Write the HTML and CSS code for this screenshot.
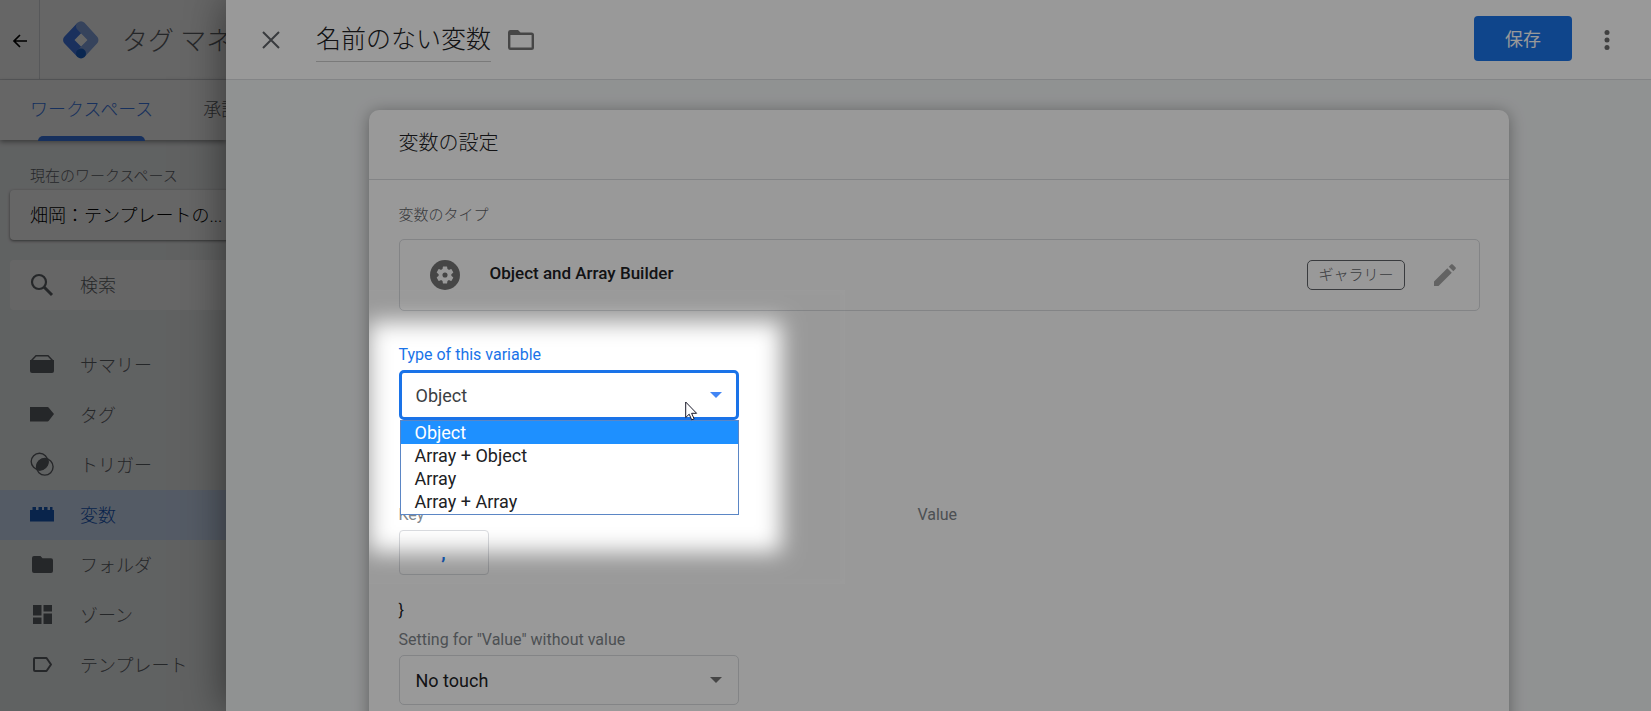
FILE: index.html
```html
<!DOCTYPE html>
<html lang="ja">
<head>
<meta charset="utf-8">
<title>タグ マネージャー</title>
<meta name="viewport" content="width=device-width, initial-scale=1">
<link rel="stylesheet" href="styles.css">
</head>
<body>
<div class="app">
  <div class="workspace">
    <header class="topbar">
      <button class="back" aria-label="戻る">
        <svg width="16" height="16" viewBox="0 0 16 16" fill="none" stroke="#000" stroke-width="1.700"><path d="M15 8H2.500M8 2L2 8l6 6"/></svg>
      </button>
      <div class="brand">
        <svg width="36" height="38" viewBox="0 0 36 38">
          <path d="M14.500 1.800L1.500 15.500a5 5 0 0 0 0 7L14.500 36l7-7L11.500 19l10-10.200z" fill="#4279e8"/>
          <path d="M21.500 1.800a4.800 4.800 0 0 0-7 0 4.800 4.800 0 0 0 0 7L24.500 19l-10 10 7 7L34 22.500a5 5 0 0 0 0-7z" fill="#86a7e6"/>
          <circle cx="18" cy="32.500" r="5" fill="#1c63c9"/>
        </svg>
        <span class="brand-name">タグ マネージャー</span>
      </div>
    </header>
    <nav class="tabs">
      <a class="tab tab-active" href="#workspace">ワークスペース</a>
      <a class="tab" href="#approval">承認</a>
    </nav>
    <aside class="sidebar">
      <div class="current-label">現在のワークスペース</div>
      <button class="current">畑岡：テンプレートの...</button>
      <label class="search">
        <svg width="24" height="24" viewBox="0 0 24 24" fill="none" stroke="#5f6368" stroke-width="2.200"><circle cx="9" cy="9" r="7"/><path d="M14 14l8 8" stroke-width="3"/></svg>
        <input class="search-input" type="text" placeholder="検索" aria-label="検索">
      </label>
      <nav class="menu">
        <a class="item" href="#overview">
          <svg width="24" height="24" viewBox="0 0 24 24"><path d="M0 8h24v11a2 2 0 0 1-2 2H2a2 2 0 0 1-2-2z" fill="currentColor"/><path d="M1.500 8.500L6 3.700h12l4.500 4.800" fill="none" stroke="currentColor" stroke-width="1.500"/></svg>
          サマリー</a>
        <a class="item" href="#tags">
          <svg width="24" height="24" viewBox="0 0 24 24"><path d="M0 5h17c1 0 1.500.300 2 1l5 6-5 6.500c-.500.700-1 1-2 1H0z" fill="currentColor"/></svg>
          タグ</a>
        <a class="item" href="#triggers">
          <svg width="24" height="24" viewBox="0 0 24 24" fill="none" stroke="currentColor" stroke-width="1.400"><circle cx="9.500" cy="9.500" r="8.300"/><circle cx="14.800" cy="14.800" r="8.300"/><path d="M17.700 7.200a8.300 8.300 0 0 1-10.500 10.300A8.300 8.300 0 0 1 17.700 7.200z" fill="currentColor"/></svg>
          トリガー</a>
        <a class="item item-active" href="#variables">
          <svg width="24" height="24" viewBox="0 0 24 24"><path d="M0 8h2.500V5H6v3h2.500V5H12v3h2V5h3.500v3H20V5h2.500v3H24v11.500H0z" fill="currentColor"/></svg>
          変数</a>
        <a class="item" href="#folders">
          <svg width="24" height="24" viewBox="0 0 24 24"><path d="M4 4h6.500l2 2.200H21a2 2 0 0 1 2 2V19a2 2 0 0 1-2 2H4a2 2 0 0 1-2-2V6a2 2 0 0 1 2-2z" fill="currentColor"/></svg>
          フォルダ</a>
        <a class="item" href="#zones">
          <svg width="24" height="24" viewBox="0 0 24 24"><path d="M3 3h8.500v10.500H3zM13.500 3H22v6.500h-8.500zM3 15.500h8.500V22H3zM13.500 11.500H22V22h-8.500z" fill="currentColor"/></svg>
          ゾーン</a>
        <a class="item" href="#templates">
          <svg width="24" height="24" viewBox="0 0 24 24" fill="none" stroke="currentColor" stroke-width="2" stroke-linejoin="round"><path d="M5 6h11.500L21 12.500 16.500 19H5a1 1 0 0 1-1-1V7a1 1 0 0 1 1-1z"/></svg>
          テンプレート</a>
      </nav>
    </aside>
    <div class="scrim"></div>
  </div>

  <main class="sheet">
    <header class="sheet-head">
      <button class="icon-btn" aria-label="閉じる">
        <svg width="20" height="20" viewBox="0 0 20 20" stroke="#5f6368" stroke-width="2"><path d="M2 2l16 16M18 2L2 18"/></svg>
      </button>
      <h1 class="sheet-title">名前のない変数</h1>
      <button class="icon-btn" aria-label="フォルダ">
        <svg width="26" height="20" viewBox="0 0 26 20"><path d="M2.500 0h7.500L12.500 2.500h11A2.500 2.500 0 0 1 26 5v12.500a2.500 2.500 0 0 1-2.500 2.500h-21A2.500 2.500 0 0 1 0 17.500v-15A2.500 2.500 0 0 1 2.500 0zM2.400 5v12.500h21.200V5z" fill="#757575"/></svg>
      </button>
      <button class="save">保存</button>
      <button class="icon-btn" aria-label="その他">
        <svg width="6" height="20" viewBox="0 0 6 20" fill="#6b6b6b"><circle cx="3" cy="2.500" r="2.500"/><circle cx="3" cy="10" r="2.500"/><circle cx="3" cy="17.500" r="2.500"/></svg>
      </button>
    </header>
    <div class="sheet-body">
      <section class="card">
        <h2 class="card-title">変数の設定</h2>
        <div class="card-body">
          <div class="label label-ja">変数のタイプ</div>
          <div class="type">
            <svg width="30" height="30" viewBox="0 0 30 30"><circle cx="15" cy="15" r="15" fill="#757575"/><g transform="translate(4.800 4.800) scale(.85)"><path d="M19.430 12.980c.040-.320.070-.640.070-.980s-.030-.660-.070-.980l2.110-1.650c.190-.150.240-.420.120-.640l-2-3.460c-.120-.220-.390-.300-.610-.220l-2.490 1c-.520-.400-1.080-.730-1.690-.980l-.380-2.650A.488.488 0 0 0 14 2h-4c-.250 0-.460.180-.490.420l-.380 2.650c-.610.250-1.170.590-1.690.980l-2.490-1c-.230-.090-.490 0-.610.220l-2 3.460c-.130.220-.070.490.120.640l2.110 1.650c-.040.320-.070.650-.070.980s.030.660.070.980l-2.110 1.650c-.190.150-.240.420-.120.640l2 3.460c.120.220.390.300.610.220l2.490-1c.520.400 1.080.730 1.690.980l.380 2.650c.030.240.240.420.490.420h4c.250 0 .460-.180.490-.420l.380-2.650c.610-.250 1.170-.590 1.690-.980l2.490 1c.230.090.490 0 .610-.220l2-3.460c.120-.220.070-.490-.120-.640zM12 15a3 3 0 1 1 0-6 3 3 0 0 1 0 6z" fill="#fff"/></g></svg>
            <span class="type-name">Object and Array Builder</span>
            <span class="chip">ギャラリー</span>
            <button class="icon-btn" aria-label="編集">
              <svg width="24" height="24" viewBox="0 0 24 24"><path d="M1 18.500V23h4.500L18.800 9.700l-4.500-4.500zM22.500 6c.500-.500.500-1.200 0-1.700l-2.800-2.800c-.500-.500-1.200-.500-1.700 0l-2.200 2.200 4.500 4.500z" fill="#a6a6a6"/></svg>
            </button>
          </div>

          <label class="label label-focus" for="kind">Type of this variable</label>
          <div class="picker">
            <select class="select select-focus" id="kind">
              <option>Object</option>
              <option>Array + Object</option>
              <option>Array</option>
              <option>Array + Array</option>
            </select>
            <ul class="options">
              <li class="option option-on">Object</li>
              <li class="option">Array + Object</li>
              <li class="option">Array</li>
              <li class="option">Array + Array</li>
            </ul>
            <svg class="pointer" width="13" height="20" viewBox="0 0 13 20"><path d="M.700 1v15.500l3.500-3.300 2.500 5.600 2.400-1-2.500-5.500h5z" fill="#fff" stroke="#1a1a2a"/></svg>
          </div>

          <div class="pairs">
            <div class="label">Key</div>
            <div class="label">Value</div>
          </div>
          <button class="add">,</button>
          <div class="brace">}</div>

          <label class="label" for="empty">Setting for "Value" without value</label>
          <div class="picker">
            <select class="select" id="empty"><option>No touch</option></select>
          </div>
        </div>
      </section>
    </div>
  </main>
</div>
<div class="spotlight"></div>
</body>
</html>
```
FILE: styles.css
```css
* { box-sizing: border-box; }

body {
  margin: 0;
  overflow: hidden;
  font-family: Roboto, "Noto Sans CJK JP", sans-serif;
  font-size: 18px;
  font-weight: 300;
  color: #202124;
}

button, input, select { font: inherit; color: inherit; }
button { border: 0; padding: 0; background: none; }
a { color: inherit; text-decoration: none; }
h1, h2 { margin: 0; font-weight: 300; }
svg { display: block; flex: none; }

.app {
  display: grid;
  grid-template-columns: 226px minmax(0, 1fr);
  height: 100vh;
}

/* Workspace behind the sheet */
.workspace {
  position: relative;
  overflow: hidden;
  display: flex;
  flex-direction: column;
  background: #f1f3f4;
  white-space: nowrap;
}
.topbar {
  display: flex;
  height: 80px;
  flex: none;
  background: #fff;
  border-bottom: 1px solid #dadce0;
}
.back {
  display: flex;
  align-items: center;
  padding: 2px 11px 0 12px;
  border-right: 1px solid #dadce0;
}
.brand { display: flex; align-items: center; gap: 23px; padding-left: 23px; }
.brand-name { padding-bottom: 3px; font-size: 26px; color: #5f6368; }
.tabs {
  display: flex;
  flex: none;
  height: 60px;
  padding-left: 30px;
  gap: 50px;
  background: #fff;
  box-shadow: 0 2px 5px rgba(0, 0, 0, .4);
  color: #5f6368;
}
.tab { display: flex; align-items: center; position: relative; padding-bottom: 4px; }
.tab-active { color: #3b78e7; }
.tab-active::after {
  content: "";
  position: absolute;
  inset: auto 8px -1px;
  height: 5px;
  border-radius: 5px 5px 0 0;
  background: #3b78e7;
}
.sidebar { padding-top: 23px; }
.current-label {
  padding-left: 30px;
  font-size: 15px;
  line-height: 26px;
  color: #5f6368;
}
.current {
  display: block;
  width: 280px;
  height: 50px;
  margin: 1px 0 0 10px;
  padding: 0 0 3px 20px;
  text-align: left;
  color: #000;
  background: #fff;
  border-radius: 4px;
  box-shadow: 0 1px 3px rgba(0, 0, 0, .5);
}
.search {
  display: flex;
  align-items: center;
  gap: 26px;
  width: 280px;
  height: 50px;
  margin: 20px 0 30px 10px;
  padding-left: 20px;
  background: #fff;
  border-radius: 4px;
}
.search-input { width: 160px; border: 0; padding: 0; background: none; }
.search-input::placeholder { color: #5f6368; opacity: 1; }
.item {
  display: flex;
  align-items: center;
  gap: 26px;
  height: 50px;
  padding: 0 0 2px 30px;
  color: #5f6368;
}
.item-active { background: #d2e3fc; color: #185abc; }
.scrim {
  position: absolute;
  inset: 0;
  background: rgba(0, 0, 0, .33);
}

/* Sheet */
.sheet {
  position: relative;
  display: flex;
  flex-direction: column;
  min-width: 0;
  min-height: 0;
  background: #f1f3f4;
  box-shadow: 0 0 40px rgba(0, 0, 0, .5);
}
.sheet-head {
  display: flex;
  align-items: center;
  height: 80px;
  flex: none;
  padding: 0 41px 0 35px;
  background: #fff;
  border-bottom: 1px solid #dadce0;
}
.sheet-title {
  margin: 0 17px 0 35px;
  padding-top: 2px;
  font-size: 25px;
  line-height: 42px;
  border-bottom: 1px solid #ccc;
}
.save {
  height: 45px;
  margin: 0 32px 2px auto;
  padding: 0 31px 2px;
  border-radius: 4px;
  background: #1a73e8;
  color: #fff;
  font-weight: 400;
}
.sheet-body { flex: 1; min-height: 0; padding-top: 30px; }
.card {
  width: 80%;
  min-height: 100%;
  margin: 0 auto;
  background: #fff;
  border-radius: 10px 10px 0 0;
  box-shadow: 0 2px 16px rgba(0, 0, 0, .35);
}
.card-title {
  padding: 15px 30px 18px;
  font-size: 20px;
  line-height: 36px;
  border-bottom: 1px solid #dadce0;
}
.card-body { padding: 22px 29px 30px 30px; }
.label {
  display: block;
  font-size: 16px;
  font-weight: 400;
  line-height: 26px;
  color: #80868b;
}
.label-ja { font-size: 15px; font-weight: 300; color: #5f6368; }
.label-focus { color: #1a73e8; }
.type {
  display: flex;
  align-items: center;
  height: 72px;
  margin: 11px 0 31px;
  padding: 0 22px 0 30px;
  border: 1px solid #dadce0;
  border-radius: 5px;
}
.type-name {
  margin: 0 auto 0 30px;
  padding-bottom: 4px;
  font-size: 17px;
  font-weight: 500;
}
.chip {
  margin-right: 28px;
  padding: 0 10px;
  border: 1px solid #5f6368;
  border-radius: 5px;
  font-size: 15px;
  line-height: 28px;
  color: #5f6368;
}
.picker { position: relative; width: 340px; margin-top: 2px; }
.picker::after {
  content: "";
  position: absolute;
  top: 22px;
  right: 17px;
  border: 6px solid transparent;
  border-top-color: #757575;
  border-bottom: 0;
}
.picker:has(.select-focus)::after { border-top-color: #4285f4; }
.select {
  appearance: none;
  display: block;
  width: 100%;
  height: 50px;
  padding: 0 16px;
  border: 1px solid #dadce0;
  border-radius: 5px;
  background: #fff;
  font-weight: 400;
}
.select-focus { padding: 0 14px; border: 3px solid #1a73e8; color: #3c4043; }
.options {
  position: absolute;
  z-index: 1;
  top: 50px;
  left: 1px;
  right: 0;
  margin: 0;
  padding: 0 0 1px;
  list-style: none;
  background: #fff;
  border: 1px solid #5b86c5;
}
.option { padding-left: 14px; line-height: 23px; font-weight: 400; }
.option-on { background: #1e90ff; color: #fff; }
.pointer { position: absolute; z-index: 2; top: 31px; left: 286px; }
.pairs {
  display: grid;
  grid-template-columns: 12fr 13fr;
  margin: 82px 0 2px;
}
.add {
  display: block;
  width: 90px;
  height: 45px;
  border: 1px solid #dadce0;
  border-radius: 4px;
  color: #1a73e8;
  font-weight: 700;
}
.brace { margin: 24px 0 4px; font-size: 16px; font-weight: 400; line-height: 24px; }

/* Dims the page except for the softly edged region round the open list */
.spotlight {
  position: fixed;
  z-index: 10;
  top: 290px;
  left: 369px;
  width: 476px;
  height: 294px;
  pointer-events: none;
  box-shadow: 0 0 0 2000px rgba(0, 0, 0, .4), inset -32px 0 22px 32px rgba(0, 0, 0, .4);
}
```
